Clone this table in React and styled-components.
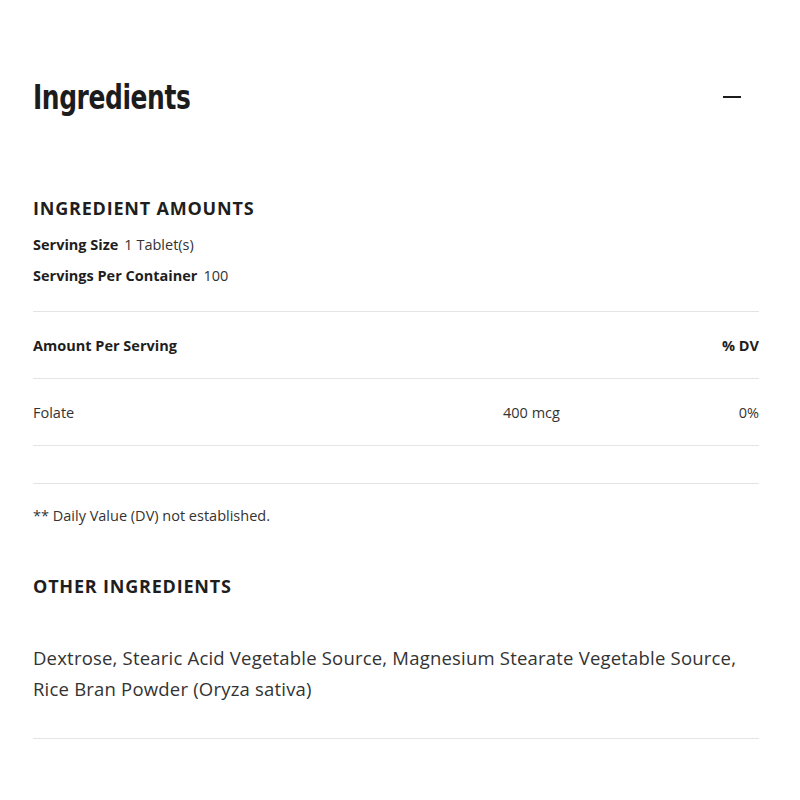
import React, { useState } from "react";
import styled, { createGlobalStyle } from "styled-components";

const GlobalStyle = createGlobalStyle`
  body {
    margin: 0;
    background: #ffffff;
    font-family: "Open Sans", Lato, sans-serif;
    color: #222222;
  }
`;

const Page = styled.div`
  width: 726px;
  margin-left: 33px;
  padding-bottom: 40px;
`;

const Header = styled.div`
  display: flex;
  align-items: center;
  justify-content: space-between;
  height: 50px;
  margin-top: 72px;
`;

const Title = styled.h2`
  margin: 0;
  font-family: "DejaVu Sans", Roboto, sans-serif;
  font-stretch: condensed;
  font-size: 33px;
  font-weight: 700;
  color: #1c1c1c;
  letter-spacing: -0.5px;
  transform: scaleX(0.84);
  transform-origin: left center;
`;

const Toggle = styled.button`
  border: none;
  background: none;
  padding: 0;
  margin-right: 18px;
  width: 18px;
  height: 18px;
  display: flex;
  align-items: center;
  cursor: pointer;
`;

const SectionTitle = styled.h3`
  margin: ${({ $top }) => $top}px 0 0;
  font-size: 18px;
  line-height: 22px;
  font-weight: 700;
  letter-spacing: 0.8px;
  color: #1e1e1e;
  text-transform: uppercase;
`;

const InfoRows = styled.div`
  margin-top: 10px;
`;

const InfoRow = styled.div`
  font-size: 14.5px;
  line-height: 31px;
  color: #333333;
`;

const Label = styled.span`
  font-weight: 700;
  color: #1e1e1e;
  margin-right: 6px;
`;

const Table = styled.div`
  margin-top: 20px;
  border-top: 1px solid #e4e4e4;
`;

const Row = styled.div`
  display: grid;
  grid-template-columns: 470px 1fr auto;
  align-items: center;
  height: ${({ $h }) => $h || 66}px;
  border-bottom: 1px solid #e4e4e4;
  font-size: 14.5px;
  font-weight: ${({ $head }) => ($head ? 700 : 400)};
  color: ${({ $head }) => ($head ? "#1e1e1e" : "#333333")};
`;

const Cell = styled.div`
  text-align: ${({ $right }) => ($right ? "right" : "left")};
`;

const Note = styled.p`
  margin: 22px 0 0;
  font-size: 14.5px;
  line-height: 20px;
  color: #333333;
`;

const Paragraph = styled.p`
  margin: 45px 0 0;
  font-size: 18.5px;
  line-height: 31px;
  letter-spacing: 0.2px;
  color: #333333;
  padding-bottom: 34px;
  border-bottom: 1px solid #e4e4e4;
`;

const nutrients = [{ name: "Folate", amount: "400 mcg", dv: "0%" }];

export default function App() {
  const [open, setOpen] = useState(true);

  return (
    <>
      <GlobalStyle />
      <Page>
        <Header>
          <Title>Ingredients</Title>
          <Toggle onClick={() => setOpen(!open)} aria-label="Collapse">
            <svg width="18" height="18" viewBox="0 0 18 18">
              <rect x="0" y="8" width="18" height="2" fill="#1c1c1c" />
            </svg>
          </Toggle>
        </Header>

        <SectionTitle $top={75}>Ingredient Amounts</SectionTitle>
        <InfoRows>
          <InfoRow>
            <Label>Serving Size</Label>1 Tablet(s)
          </InfoRow>
          <InfoRow>
            <Label>Servings Per Container</Label>100
          </InfoRow>
        </InfoRows>

        <Table>
          <Row $head>
            <Cell>Amount Per Serving</Cell>
            <Cell />
            <Cell $right>% DV</Cell>
          </Row>
          {nutrients.map((n) => (
            <Row key={n.name}>
              <Cell>{n.name}</Cell>
              <Cell>{n.amount}</Cell>
              <Cell $right>{n.dv}</Cell>
            </Row>
          ))}
          <Row $h={37} />
        </Table>

        <Note>** Daily Value (DV) not established.</Note>

        <SectionTitle $top={49}>Other Ingredients</SectionTitle>
        <Paragraph>
          Dextrose, Stearic Acid Vegetable Source, Magnesium Stearate Vegetable Source,
          <br />
          Rice Bran Powder (Oryza sativa)
        </Paragraph>
      </Page>
    </>
  );
}
